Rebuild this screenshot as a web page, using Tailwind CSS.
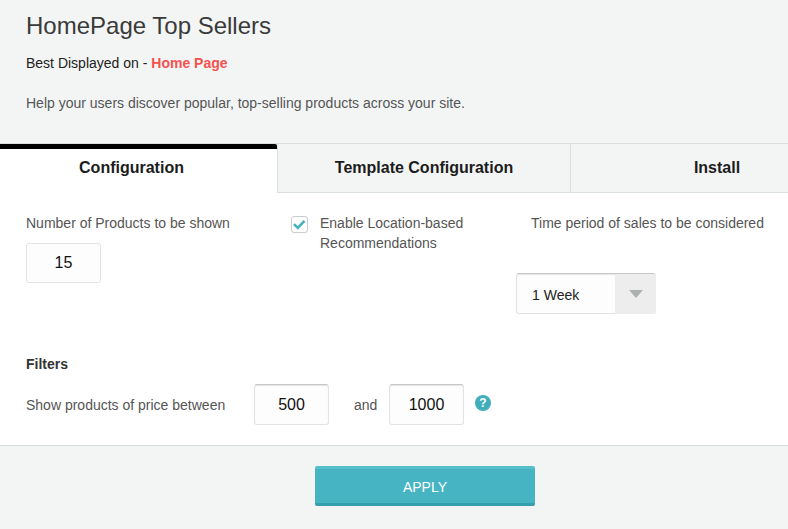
<!DOCTYPE html>
<html lang="en">

<head>
    <meta charset="UTF-8" />
    <meta name="viewport" content="width=device-width, initial-scale=1.0" />
    <title>HomePage Top Sellers</title>
    <script src="https://cdn.jsdelivr.net/npm/@tailwindcss/browser@4"></script>
</head>

<body class="min-h-screen bg-[#f3f5f5] font-['Liberation_Sans',Arial,sans-serif] text-[14px] leading-5 text-[#555]">
    <header class="px-[26px] pt-[10px] pb-[30px]">
        <h1 class="text-[24px] leading-8 text-[#3a3a3a]">HomePage Top Sellers</h1>
        <p class="mt-[11px] text-[#222]">Best Displayed on - <a href="#" class="font-bold text-[#f4524f]">Home Page</a></p>
        <p class="mt-5">Help your users discover popular, top-selling products across your site.</p>
    </header>

    <!-- Tabs -->
    <nav class="flex h-[50px] overflow-hidden border-t border-[#d9dede] text-[16px] font-bold text-[#1c1c1c]">
        <button type="button" class="w-[277px] shrink-0 rounded-tr-xs border-t-5 border-black bg-white pr-[14px] pb-[6px]">Configuration</button>
        <button type="button" class="w-[294px] shrink-0 border-x border-b border-[#d9dede]">Template Configuration</button>
        <button type="button" class="min-w-[292px] flex-1 border-b border-[#d9dede]">Install</button>
    </nav>

    <form>
        <main class="border-b border-[#d9dcdc] bg-white px-[26px] py-5">
            <div class="grid grid-cols-[265px_225px_1fr]">
                <div>
                    <label for="count" class="block">Number of Products to be shown</label>
                    <input id="count" type="text" value="15" class="mt-[10px] block h-10 w-[75px] rounded-[3px] border border-[#e3e3e3] bg-[#fdfdfd] text-center text-[16px] text-[#111]" />
                </div>
                <div class="flex items-start gap-3">
                    <span class="mt-[3px] grid shrink-0">
                        <input id="location" type="checkbox" checked class="peer col-start-1 row-start-1 size-[17px] appearance-none rounded-[3px] border border-[#c9cccc] bg-white" />
                        <svg class="pointer-events-none invisible col-start-1 row-start-1 size-[17px] peer-checked:visible" viewBox="0 0 17 17" fill="none" stroke="#46b2c0" stroke-width="2.6">
                            <path d="M3 8.2 6.8 12 13.5 4.8" />
                        </svg>
                    </span>
                    <label for="location" class="w-[160px]">Enable Location-based Recommendations</label>
                </div>
                <div>
                    <label for="period" class="block pl-[15px] whitespace-nowrap">Time period of sales to be considered</label>
                    <div class="mt-10 grid w-[140px]">
                        <select id="period" class="col-start-1 row-start-1 h-[41px] appearance-none rounded-[3px] border border-[#e3e3e3] border-t-[#c6c6c6] bg-[#fdfdfd] pt-[2px] pl-[15px] text-[#222] shadow-[inset_0_1px_1px_#e6e6e6]">
                            <option>1 Week</option>
                            <option>2 Weeks</option>
                            <option>1 Month</option>
                        </select>
                        <span class="pointer-events-none col-start-1 row-start-1 mt-px flex w-[41px] items-center justify-center justify-self-end rounded-r-[3px] bg-[#ededed]">
                            <svg class="h-[8px] w-[14px]" viewBox="0 0 14 8" fill="#adb0b0">
                                <path d="M0 0h14L7 8z" />
                            </svg>
                        </span>
                    </div>
                </div>
            </div>

            <h2 class="mt-10 font-bold text-[#333]">Filters</h2>
            <div class="mt-[10px] flex items-center">
                <label for="min" class="w-[228px]">Show products of price between</label>
                <input id="min" type="text" value="500" class="h-[41px] w-[75px] rounded-[3px] border border-[#e3e3e3] border-t-[#c6c6c6] bg-[#fdfdfd] text-center text-[16px] text-[#111] shadow-[inset_0_1px_1px_#e6e6e6]" />
                <label for="max" class="w-[60px] pl-[25px]">and</label>
                <input id="max" type="text" value="1000" class="h-[41px] w-[75px] rounded-[3px] border border-[#e3e3e3] border-t-[#c6c6c6] bg-[#fdfdfd] text-center text-[16px] text-[#111] shadow-[inset_0_1px_1px_#e6e6e6]" />
                <button type="button" aria-label="Help" class="mb-1 ml-[11px] flex size-4 items-center justify-center rounded-full bg-[#42aebb] text-[12px] font-bold text-white">?</button>
            </div>
        </main>

        <footer class="flex justify-center py-5 pl-[62px]">
            <button type="submit" class="h-10 w-[220px] rounded-xs border-t-3 border-b-3 border-t-[#55bfca] border-b-[#369fac] bg-[#46b4c2] pt-[2px] text-white">APPLY</button>
        </footer>
    </form>
</body>

</html>
